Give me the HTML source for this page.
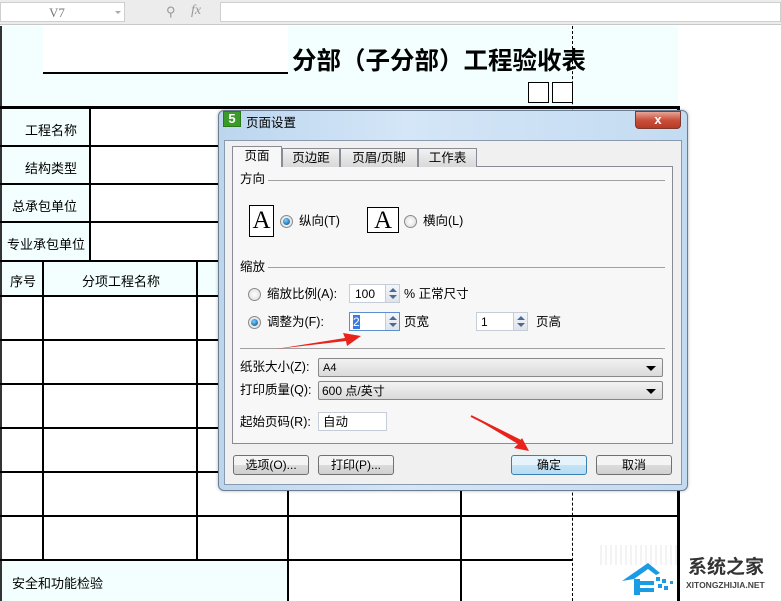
<!DOCTYPE html>
<html><head><meta charset="utf-8"><style>
*{margin:0;padding:0;box-sizing:border-box}
body{width:781px;height:601px;overflow:hidden;background:#fff;position:relative;font-family:"Liberation Sans","Noto Sans CJK SC",sans-serif;font-size:12px;color:#000}
.a{position:absolute}
.hl{position:absolute;height:2px;background:#000}
.vl{position:absolute;width:2px;background:#000}
.cy{position:absolute;background:#f2fffe}
.t{position:absolute;font-size:13px;white-space:nowrap}
.d{position:absolute;font-size:12px;white-space:nowrap;line-height:14px}
.radio{position:absolute;width:13px;height:13px;border-radius:50%;border:1px solid #8a8a8a;background:radial-gradient(circle,#fff,#d8d8d8)}
.radio.on::after{content:"";position:absolute;left:2px;top:2px;width:7px;height:7px;border-radius:50%;background:radial-gradient(circle at 40% 35%,#7fd0ff,#1b6fb0 70%)}
.inp{position:absolute;background:#fff;border:1px solid #c5cdd8;height:19px}
.spin{position:absolute;right:0;top:0;width:14px;height:100%;border-left:1px solid #c5cdd8;background:linear-gradient(#f4f6f9,#dfe4ea)}
.spin::before{content:"";position:absolute;left:3px;top:3px;border:4px solid transparent;border-top:0;border-bottom:4px solid #4a6a9a;width:0;height:0}
.spin::after{content:"";position:absolute;left:3px;bottom:3px;border:4px solid transparent;border-bottom:0;border-top:4px solid #4a6a9a;width:0;height:0}
.sel{position:absolute;border:1px solid #888;border-radius:2px;background:linear-gradient(#f2f2f2,#dadada);height:19px}
.sel::after{content:"";position:absolute;right:6px;top:7px;border:5px solid transparent;border-top:5px solid #000;border-bottom:0}
.btn{position:absolute;border:1px solid #707070;border-radius:3px;background:linear-gradient(#f4f4f4 50%,#dcdcdc 50%,#d0d0d0);height:20px;text-align:center;line-height:18px;font-size:12px}
.tab{position:absolute;top:148px;height:19px;border:1px solid #898c95;border-bottom:none;background:linear-gradient(#f2f2f2,#d8d8d8);text-align:center;line-height:18px;font-size:12.5px}
</style></head><body>
<!-- toolbar -->
<div class="a" style="left:0;top:0;width:781px;height:25px;background:#ececec;border-bottom:1px solid #c8c8c8"></div>
<div class="a" style="left:0;top:2px;width:125px;height:20px;background:#fff;border:1px solid #cfcfcf"></div>
<div class="d" style="left:49px;top:6px;color:#777;font-family:'Liberation Serif',serif;font-size:13px">V7</div>
<div class="a" style="left:115px;top:11px;border:3px solid transparent;border-top:3px solid #aaa"></div>
<div class="d" style="left:166px;top:5px;color:#999;font-size:13px">&#9906;</div>
<div class="d" style="left:191px;top:4px;color:#999;font-style:italic;font-family:'Liberation Serif',serif;font-size:14px">fx</div>
<div class="a" style="left:220px;top:2px;width:561px;height:20px;background:#fff;border:1px solid #cfcfcf"></div>
<!-- sheet bg -->
<div class="cy" style="left:0;top:26px;width:678px;height:81px"></div>
<div class="a" style="left:43px;top:26px;width:245px;height:47px;background:#fff"></div>
<div class="vl" style="left:0;top:26px;height:575px;background:#333"></div>
<div class="a" style="left:43px;top:72px;width:245px;height:2px;background:#000"></div>
<div class="a" style="left:292px;top:42px;font-size:24.5px;font-weight:bold;white-space:nowrap">分部（子分部）工程验收表</div>
<div class="a" style="left:528px;top:82px;width:21px;height:21px;border:1px solid #000;background:#fff"></div>
<div class="a" style="left:552px;top:82px;width:21px;height:21px;border:1px solid #000;background:#fff"></div>
<!-- table cyan cells -->
<div class="cy" style="left:2px;top:108px;width:88px;height:152px"></div>
<div class="cy" style="left:2px;top:261px;width:676px;height:35px"></div>
<div class="cy" style="left:2px;top:561px;width:286px;height:40px"></div>
<!-- lines -->
<div class="hl" style="left:0;top:106px;width:680px;height:3px"></div>
<div class="hl" style="left:0;top:145px;width:678px"></div>
<div class="hl" style="left:0;top:183px;width:678px"></div>
<div class="hl" style="left:0;top:221px;width:678px"></div>
<div class="hl" style="left:0;top:260px;width:678px"></div>
<div class="hl" style="left:0;top:295px;width:678px"></div>
<div class="hl" style="left:0;top:339px;width:678px"></div>
<div class="hl" style="left:0;top:383px;width:678px"></div>
<div class="hl" style="left:0;top:427px;width:678px"></div>
<div class="hl" style="left:0;top:471px;width:678px"></div>
<div class="hl" style="left:0;top:515px;width:678px"></div>
<div class="hl" style="left:0;top:559px;width:572px"></div>
<div class="vl" style="left:89px;top:107px;height:154px"></div>
<div class="vl" style="left:42px;top:260px;height:300px"></div>
<div class="vl" style="left:196px;top:260px;height:300px"></div>
<div class="vl" style="left:287px;top:260px;height:341px"></div>
<div class="vl" style="left:460px;top:260px;height:341px"></div>
<div class="vl" style="left:677px;top:107px;height:494px;width:3px"></div>
<div class="a" style="left:572px;top:26px;width:0;height:575px;border-left:1px dashed #000"></div>
<div class="t" style="left:25px;top:120px">工程名称</div>
<div class="t" style="left:25px;top:158px">结构类型</div>
<div class="t" style="left:12px;top:196px">总承包单位</div>
<div class="t" style="left:7px;top:234px">专业承包单位</div>
<div class="t" style="left:10px;top:271px">序号</div>
<div class="t" style="left:82px;top:271px">分项工程名称</div>
<div class="t" style="left:12px;top:573px">安全和功能检验</div>
<!-- watermark -->
<div class="a" style="left:600px;top:545px;width:80px;height:20px;background:repeating-linear-gradient(90deg,#eee 0 2px,transparent 2px 5px);opacity:.7"></div>
<svg class="a" style="left:620px;top:553px" width="62" height="45" viewBox="0 0 62 45"><path d="M2 28 L28 10 L40 20 L36 22 L28 16 L14 26 Z" fill="#1a9be6"/><rect x="14" y="26" width="6" height="16" fill="#1a9be6"/><rect x="20" y="28" width="14" height="4" fill="#1a9be6"/><rect x="20" y="35" width="14" height="4" fill="#1a9be6"/><rect x="36" y="24" width="4" height="4" fill="#1a9be6"/><rect x="42" y="26" width="4" height="4" fill="#1a9be6"/><rect x="38" y="31" width="4" height="4" fill="#1a9be6"/><rect x="44" y="33" width="4" height="4" fill="#1a9be6"/><rect x="50" y="28" width="3" height="3" fill="#1a9be6"/></svg>
<div class="a" style="left:688px;top:552px;font-size:19px;font-weight:bold;color:#333;white-space:nowrap">系统之家</div>
<div class="a" style="left:686px;top:580px;font-size:8.5px;font-weight:bold;color:#444;white-space:nowrap">XITONGZHIJIA.NET</div>
<!-- dialog -->
<div class="a" style="left:218px;top:110px;width:470px;height:381px;border:1px solid #6b7d93;border-radius:6px;background:linear-gradient(90deg,#bcd6ee,#d4e6f7 40%,#c3dbf1);box-shadow:0 0 3px rgba(0,0,0,.3)"></div>
<div class="a" style="left:223px;top:111px;width:18px;height:16px;background:#3b9a2a;border:1px solid #2a7a1a;color:#fff;font-weight:bold;font-size:13px;line-height:14px;text-align:center">5</div>
<div class="d" style="left:246px;top:116px;font-size:12.5px">页面设置</div>
<div class="a" style="left:635px;top:111px;width:46px;height:18px;border:1px solid #7a3a30;border-radius:0 0 4px 4px;background:linear-gradient(#e8a598,#c9503c 50%,#b83a26);color:#fff;font-weight:bold;text-align:center;line-height:16px;font-size:13px">x</div>
<div class="a" style="left:224px;top:140px;width:458px;height:345px;background:#f0f0f0;border:1px solid #8a9aae"></div>
<div class="a" style="left:232px;top:166px;width:441px;height:278px;border:1px solid #898c95;background:#f7f7f7"></div>
<div class="tab" style="left:232px;width:50px;top:146px;height:21px;background:#f7f7f7;z-index:2">页面</div>
<div class="tab" style="left:282px;width:58px">页边距</div>
<div class="tab" style="left:340px;width:78px">页眉/页脚</div>
<div class="tab" style="left:418px;width:59px">工作表</div>
<div class="d" style="left:240px;top:172px;font-size:12.5px">方向</div>
<div class="a" style="left:268px;top:180px;width:397px;height:1px;background:#a0a0a0"></div>
<div class="a" style="left:249px;top:205px;width:25px;height:32px;border:1px solid #000;background:#fff;font-family:'Liberation Serif',serif;font-size:25px;line-height:30px;text-align:center">A</div>
<div class="radio on" style="left:280px;top:215px"></div>
<div class="d" style="left:299px;top:214px;font-size:12.5px">纵向(T)</div>
<div class="a" style="left:367px;top:207px;width:32px;height:26px;border:1px solid #000;background:#fff;font-family:'Liberation Serif',serif;font-size:25px;line-height:26px;text-align:center">A</div>
<div class="radio" style="left:404px;top:215px"></div>
<div class="d" style="left:423px;top:214px;font-size:12.5px">横向(L)</div>
<div class="d" style="left:240px;top:260px;font-size:12.5px">缩放</div>
<div class="a" style="left:268px;top:267px;width:397px;height:1px;background:#a0a0a0"></div>
<div class="radio" style="left:248px;top:288px"></div>
<div class="d" style="left:267px;top:287px;font-size:12.5px">缩放比例(A):</div>
<div class="inp" style="left:349px;top:284px;width:51px"><span class="d" style="left:5px;top:2px">100</span><div class="spin"></div></div>
<div class="d" style="left:404px;top:287px;font-size:12.5px">% 正常尺寸</div>
<div class="radio on" style="left:248px;top:316px"></div>
<div class="d" style="left:267px;top:315px;font-size:12.5px">调整为(F):</div>
<div class="inp" style="left:349px;top:312px;width:51px;border-color:#5b8fd0"><span class="d" style="left:3px;top:2px;background:#3a7be0;color:#fff">2</span><div class="spin"></div></div>
<div class="d" style="left:404px;top:315px;font-size:12.5px">页宽</div>
<div class="inp" style="left:476px;top:312px;width:52px"><span class="d" style="left:4px;top:2px">1</span><div class="spin"></div></div>
<div class="d" style="left:536px;top:315px;font-size:12.5px">页高</div>
<div class="a" style="left:240px;top:348px;width:425px;height:1px;background:#a0a0a0"></div>
<div class="d" style="left:240px;top:360px;font-size:12.5px">纸张大小(Z):</div>
<div class="sel" style="left:318px;top:358px;width:345px"><span class="d" style="left:4px;top:2px;font-size:11px">A4</span></div>
<div class="d" style="left:240px;top:383px;font-size:12.5px">打印质量(Q):</div>
<div class="sel" style="left:318px;top:381px;width:345px"><span class="d" style="left:3px;top:2px">600 点/英寸</span></div>
<div class="d" style="left:240px;top:415px;font-size:12.5px">起始页码(R):</div>
<div class="inp" style="left:318px;top:412px;width:69px"><span class="d" style="left:4px;top:2px;font-size:12.5px">自动</span></div>
<div class="btn" style="left:233px;top:455px;width:76px">选项(O)...</div>
<div class="btn" style="left:318px;top:455px;width:76px">打印(P)...</div>
<div class="btn" style="left:511px;top:455px;width:76px;border-color:#3c7fb1;background:linear-gradient(#e6f3fb 50%,#c4e3f6 50%,#b7dcf3)">确定</div>
<div class="btn" style="left:596px;top:455px;width:76px">取消</div>
<!-- arrows -->
<svg class="a" style="left:0;top:0" width="781" height="601"><path d="M276 349 L345 338 L343 333 L361 336 L347 346 L346 341 Z" fill="#e8231b"/><path d="M471 416 L518 444 L514 448 L529 451 L522 438 L520 441 Z" fill="#e8231b"/><path d="M471 416 L521 441" stroke="#e8231b" stroke-width="2"/></svg>
</body></html>
